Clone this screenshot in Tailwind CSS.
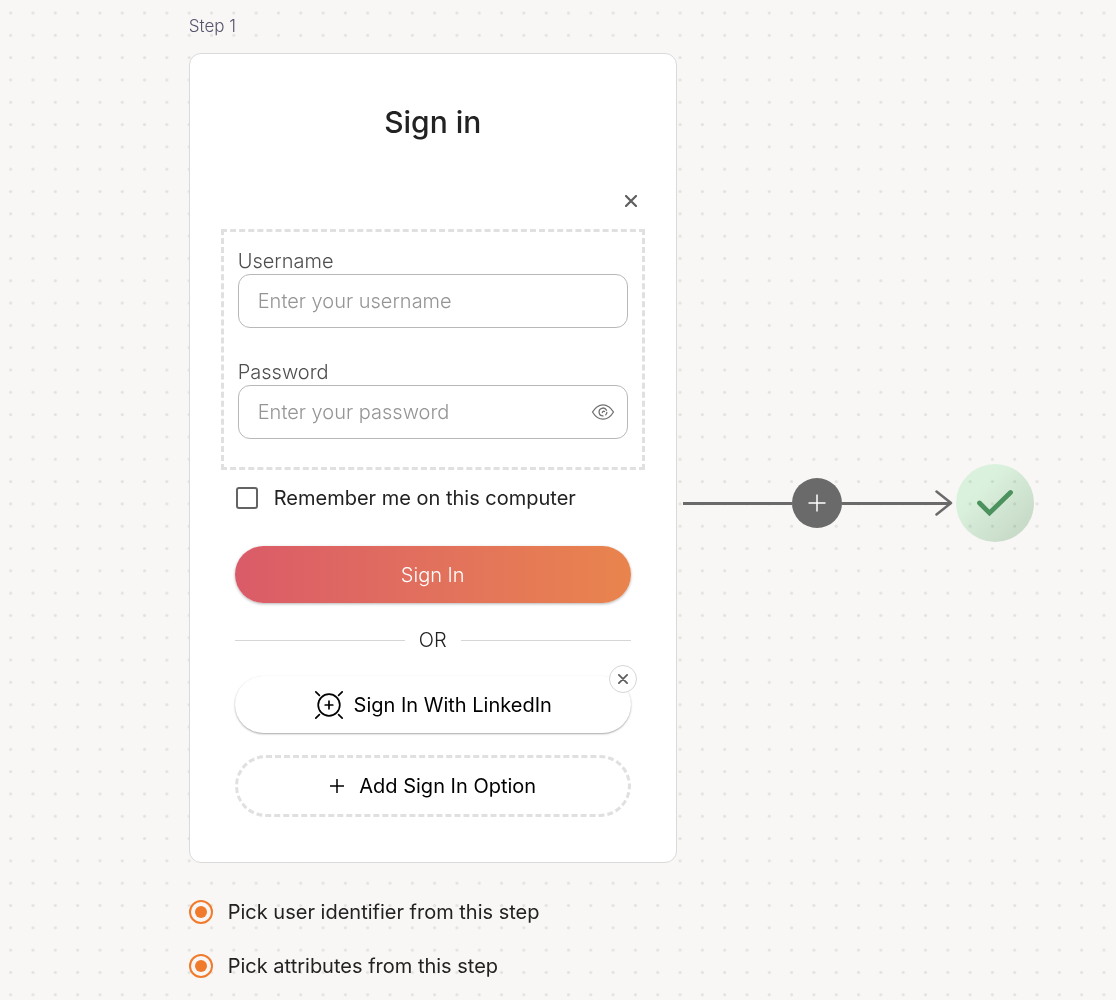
<!DOCTYPE html>
<html lang="en">
<head>
<meta charset="utf-8">
<meta name="viewport" content="width=device-width, initial-scale=1">
<title>Sign-in flow</title>
<script src="https://cdn.jsdelivr.net/npm/@tailwindcss/browser@4"></script>
</head>
<body class="relative min-h-screen bg-[#f8f7f5] font-['Inter',sans-serif] text-xl font-light text-[#222]">

<!-- Dotted canvas -->
<svg class="absolute inset-0 h-full w-full" aria-hidden="true">
  <defs>
    <pattern id="dots" x="-0.5" y="1.8" width="22.312" height="22.312" patternUnits="userSpaceOnUse">
      <circle cx="11.2" cy="11.2" r="1.6" fill="#e3e2e0"/>
    </pattern>
  </defs>
  <rect width="100%" height="100%" fill="url(#dots)"/>
</svg>

<main class="relative flex items-center pl-[17%] pr-4">
  <section class="-ml-px w-full max-w-[488px] shrink-0 py-[14px]">
    <h2 class="mb-[15px] text-[17px] leading-6 font-light text-[#55546c]">Step 1</h2>

    <div class="rounded-xl border border-[#dadada] bg-white px-[31px] pt-[49px] pb-[45px]">
      <h1 class="text-center text-3xl leading-[38px] font-medium">Sign in</h1>

      <div class="mt-12 flex justify-end pr-0.5">
        <button type="button" aria-label="Remove fields" class="grid size-6 place-items-center text-[#5f5f5f]">
          <svg class="size-3" viewBox="0 0 12 12" fill="none" stroke="currentColor" stroke-width="2.2" stroke-linecap="round"><path d="M1 1l10 10M11 1L1 11"/></svg>
        </button>
      </div>

      <form>
        <div class="mt-4 border-[3px] border-dashed border-[#e0e0e0] px-[14px] pt-4 pb-7">
          <label for="username" class="block leading-[26px] text-[#4f4f4f]">Username</label>
          <input id="username" type="text" placeholder="Enter your username" class="block h-[54px] w-full rounded-xl border border-[#b8b8b8] px-[19px] placeholder:text-[#959595]">
          <label for="password" class="mt-[31px] block leading-[26px] text-[#4f4f4f]">Password</label>
          <div class="relative">
            <input id="password" type="password" placeholder="Enter your password" class="block h-[54px] w-full rounded-xl border border-[#b8b8b8] pr-12 pl-[19px] placeholder:text-[#959595]">
            <button type="button" aria-label="Show password" class="absolute top-1/2 right-[13px] -translate-y-1/2 text-[#707070]">
              <svg class="h-4 w-6" viewBox="0 0 24 16" fill="none" stroke="currentColor" stroke-width="1.3" stroke-linecap="round" stroke-linejoin="round"><path d="M1.500 8C4.400 3.200 8 .8 12 .8S19.600 3.200 22.500 8C19.600 12.800 16 15.200 12 15.200S4.400 12.800 1.500 8Z"/><path d="M15.500 6.300A3.900 3.900 0 1 0 12 11.900"/><path d="M11.300 8.500A1.500 1.500 0 0 1 13.600 7.500M15.900 8.300A3.900 3.900 0 0 1 14.800 10.800"/></svg>
            </button>
          </div>
        </div>

        <div class="px-[14px]">
          <label class="mt-4 flex h-6 items-center gap-4 font-normal">
            <input type="checkbox" class="ml-px size-[22px] appearance-none rounded-[3px] border-2 border-[#636363]">
            Remember me on this computer
          </label>

          <button type="submit" class="mt-9 block h-[57px] w-full rounded-full bg-linear-to-r from-[#da5b68] to-[#e9844d] text-white shadow-[0_1px_3px_rgba(0,0,0,0.3)]">Sign In</button>

          <div class="mt-6 mb-[23px] flex items-center gap-[14px] leading-[26px]">
            <span class="h-px flex-1 bg-[#d6d6d6]"></span>OR<span class="h-px flex-1 bg-[#d6d6d6]"></span>
          </div>

          <div class="relative">
            <button type="button" class="flex h-[57px] w-full items-center justify-center gap-[10px] rounded-full bg-white font-normal text-black shadow-[0_1px_2px_rgba(0,0,0,0.35)]">
              <svg class="size-[30px]" viewBox="0 0 30 30" fill="none" stroke="currentColor" stroke-width="1.700" stroke-linecap="round"><circle cx="15" cy="15" r="10.800"/><path d="M15 11.200v7.600M11.200 15h7.600M1.800 1.800l3.600 3.600M28.200 1.800l-3.600 3.600M1.800 28.200l3.600-3.600M28.200 28.200l-3.600-3.600"/></svg>
              Sign In With LinkedIn
            </button>
            <button type="button" aria-label="Remove LinkedIn" class="absolute -top-[11px] -right-[6px] grid size-7 place-items-center rounded-full border border-[#d6d6d6] bg-white text-[#5f5f5f]">
              <svg class="size-2.5" viewBox="0 0 10 10" fill="none" stroke="currentColor" stroke-width="1.800" stroke-linecap="round"><path d="M.9 .9l8.200 8.200M9.100 .9L.9 9.100"/></svg>
            </button>
          </div>

          <button type="button" class="mt-[22px] flex h-[62px] w-full items-center justify-center gap-[14px] rounded-full border-[3px] border-dashed border-[#e0e0e0] font-normal text-black">
            <svg class="size-4" viewBox="0 0 16 16" fill="none" stroke="currentColor" stroke-width="1.500"><path d="M8 1v14M1 8h14"/></svg>
            Add Sign In Option
          </button>
        </div>
      </form>
    </div>

    <div class="mt-[37px] flex flex-col gap-[30px] font-normal">
      <label class="flex h-6 items-center gap-[15px]">
        <input type="radio" name="identifier" checked class="grid size-6 appearance-none place-items-center rounded-full border-2 border-[#f07b2d] before:size-3 before:rounded-full before:bg-[#f07b2d]">
        Pick user identifier from this step
      </label>
      <label class="flex h-6 items-center gap-[15px]">
        <input type="radio" name="attributes" checked class="grid size-6 appearance-none place-items-center rounded-full border-2 border-[#f07b2d] before:size-3 before:rounded-full before:bg-[#f07b2d]">
        Pick attributes from this step
      </label>
    </div>
  </section>

  <!-- Connector to the completed state -->
  <div class="flex flex-1 items-center pt-[14px] pl-[6px] text-[#6a6a6a]">
    <div class="flex max-w-[270px] flex-1 items-center">
      <span class="h-[3px] flex-1 bg-current"></span>
      <button type="button" aria-label="Add step" class="grid size-[50px] place-items-center rounded-full bg-[#6a6a6a] text-white">
        <svg class="size-[18px]" viewBox="0 0 18 18" fill="none" stroke="currentColor" stroke-width="1.500"><path d="M9 .5v17M.5 9h17"/></svg>
      </button>
      <span class="h-[3px] flex-1 bg-current"></span>
      <svg class="-ml-4 h-[26px] w-[18px]" viewBox="0 0 18 26" fill="none" stroke="currentColor" stroke-width="2.500" stroke-linecap="round" stroke-linejoin="round"><path d="M1.500 1.500L16 13L1.500 24.500"/></svg>
    </div>
    <div class="ml-[3px] grid size-[78px] shrink-0 place-items-center rounded-full bg-linear-135 from-[#e1fae6] from-30% to-[#cbe0cf] to-90% mix-blend-multiply">
      <svg class="h-7 w-[38px]" viewBox="0 0 38 28" role="img" aria-label="Complete" fill="none" stroke="#4e9762" stroke-width="4.800" stroke-linecap="round"><path d="M3.500 14L13.500 24L34.500 3.500"/></svg>
    </div>
  </div>
</main>
</body>
</html>
